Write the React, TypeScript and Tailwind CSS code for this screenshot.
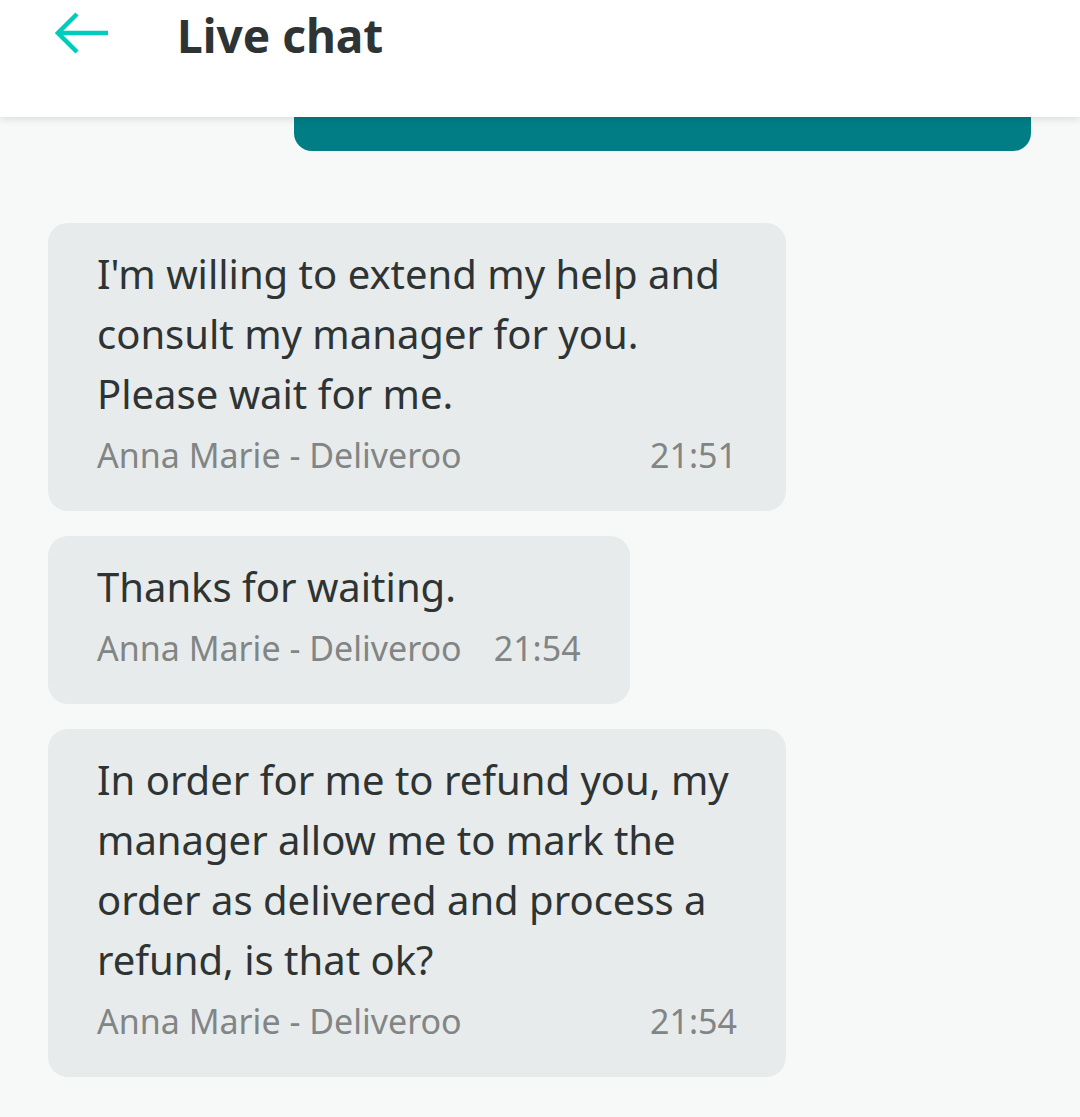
import React from 'react';

interface Message {
  id: number;
  text: string;
  author: string;
  time: string;
}

const MESSAGES: Message[] = [
  {
    id: 1,
    text: "I'm willing to extend my help and consult my manager for you. Please wait for me.",
    author: 'Anna Marie - Deliveroo',
    time: '21:51',
  },
  {
    id: 2,
    text: 'Thanks for waiting.',
    author: 'Anna Marie - Deliveroo',
    time: '21:54',
  },
  {
    id: 3,
    text: 'In order for me to refund you, my manager allow me to mark the order as delivered and process a refund, is that ok?',
    author: 'Anna Marie - Deliveroo',
    time: '21:54',
  },
];

const BackArrow = () => (
  <svg width="54" height="42" viewBox="0 0 54 42" fill="none" stroke="#00ccbc" strokeWidth={4.5} className="block">
    <path d="M3 21 H53" />
    <path d="M22 2 L3 21 L22 40" strokeLinejoin="miter" />
  </svg>
);

const AgentBubble: React.FC<{ message: Message }> = ({ message }) => (
  <div className="w-fit max-w-[738px] rounded-[20px] bg-[#e8ebeb] px-[49px] pt-[21px] pb-[26px]">
    <p className="text-[40px] leading-[60px] text-[#2e3333]">{message.text}</p>
    <div className="mt-[1px] flex items-center justify-between gap-[32px] text-[34px] leading-[60px] text-[#828585]">
      <span>{message.author}</span>
      <span>{message.time}</span>
    </div>
  </div>
);

export default function App() {
  return (
    <div className="min-h-[1117px] w-[1080px] overflow-hidden bg-[#f7f9f9]" style={{ fontFamily: '"Noto Sans", "Open Sans", sans-serif' }}>
      <header className="relative z-10 flex h-[117px] items-start bg-white pl-[55px] pt-[12px] shadow-[0_2px_8px_rgba(0,0,0,0.12)]">
        <BackArrow />
        <h1 className="ml-[68px] mt-[-4px] text-[46px] font-bold leading-[54px] text-[#2e3333]">Live chat</h1>
      </header>

      <main className="flex flex-col px-[48px]">
        <div className="ml-[246px] h-[34px] w-[737px] rounded-b-[18px] bg-[#017d86]" />
        <div className="mt-[72px] flex flex-col gap-[25px]">
          {MESSAGES.map(m => (
            <AgentBubble key={m.id} message={m} />
          ))}
        </div>
      </main>
    </div>
  );
}
